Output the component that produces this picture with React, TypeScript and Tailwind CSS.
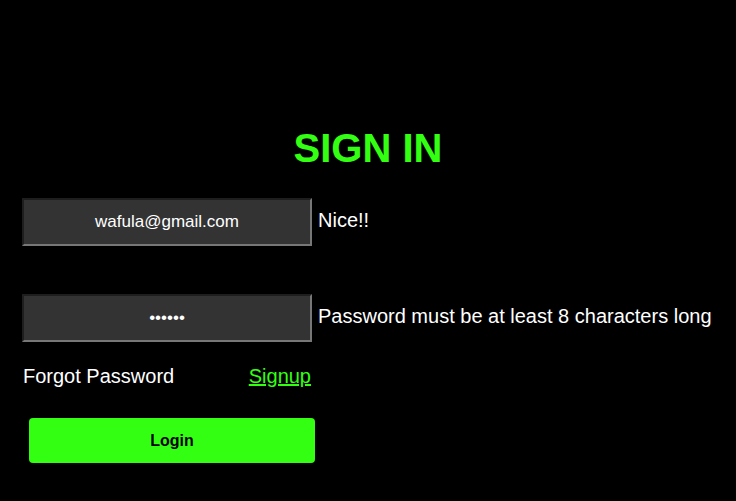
import React, { useState } from 'react';

const App = () => {
    const [email, setEmail] = useState('wafula@gmail.com');
    const [password, setPassword] = useState('123456');

    return (
        <div className="min-h-[501px] w-full bg-black text-white font-['Liberation_Sans',Arial,sans-serif]">
            <div className="pt-[125px]">
                <h1 className="text-center text-[40px] leading-[46px] font-bold text-[#33ff13]">SIGN IN</h1>
            </div>
            <form className="pl-[22px] mt-[27px]" onSubmit={(e) => e.preventDefault()}>
                <div className="flex items-baseline">
                    <input
                        type="email"
                        value={email}
                        onChange={(e) => setEmail(e.target.value)}
                        className="w-[290px] h-[48px] bg-[#333] text-white text-center text-[17px] border-2 border-t-[#1e1e1e] border-l-[#1e1e1e] border-b-[#777] border-r-[#777] outline-none"
                    />
                    <span className="ml-[6px] text-[20px]">Nice!!</span>
                </div>
                <div className="flex items-baseline mt-[48px]">
                    <input
                        type="password"
                        value={password}
                        onChange={(e) => setPassword(e.target.value)}
                        className="w-[290px] h-[48px] bg-[#333] text-white text-center text-[17px] border-2 border-t-[#1e1e1e] border-l-[#1e1e1e] border-b-[#777] border-r-[#777] outline-none"
                    />
                    <span className="ml-[6px] text-[20px]">Password must be at least 8 characters long</span>
                </div>
                <div className="flex justify-between items-center w-[289px] mt-[23px] pl-px text-[20px] leading-[23px]">
                    <span>Forgot Password</span>
                    <a href="#" className="text-[#33ff13] underline">Signup</a>
                </div>
                <button
                    type="submit"
                    className="ml-[7px] mt-[30px] w-[286px] h-[45px] rounded bg-[#33ff13] text-black font-bold text-[16px]"
                >
                    Login
                </button>
            </form>
        </div>
    );
};

export default App;
